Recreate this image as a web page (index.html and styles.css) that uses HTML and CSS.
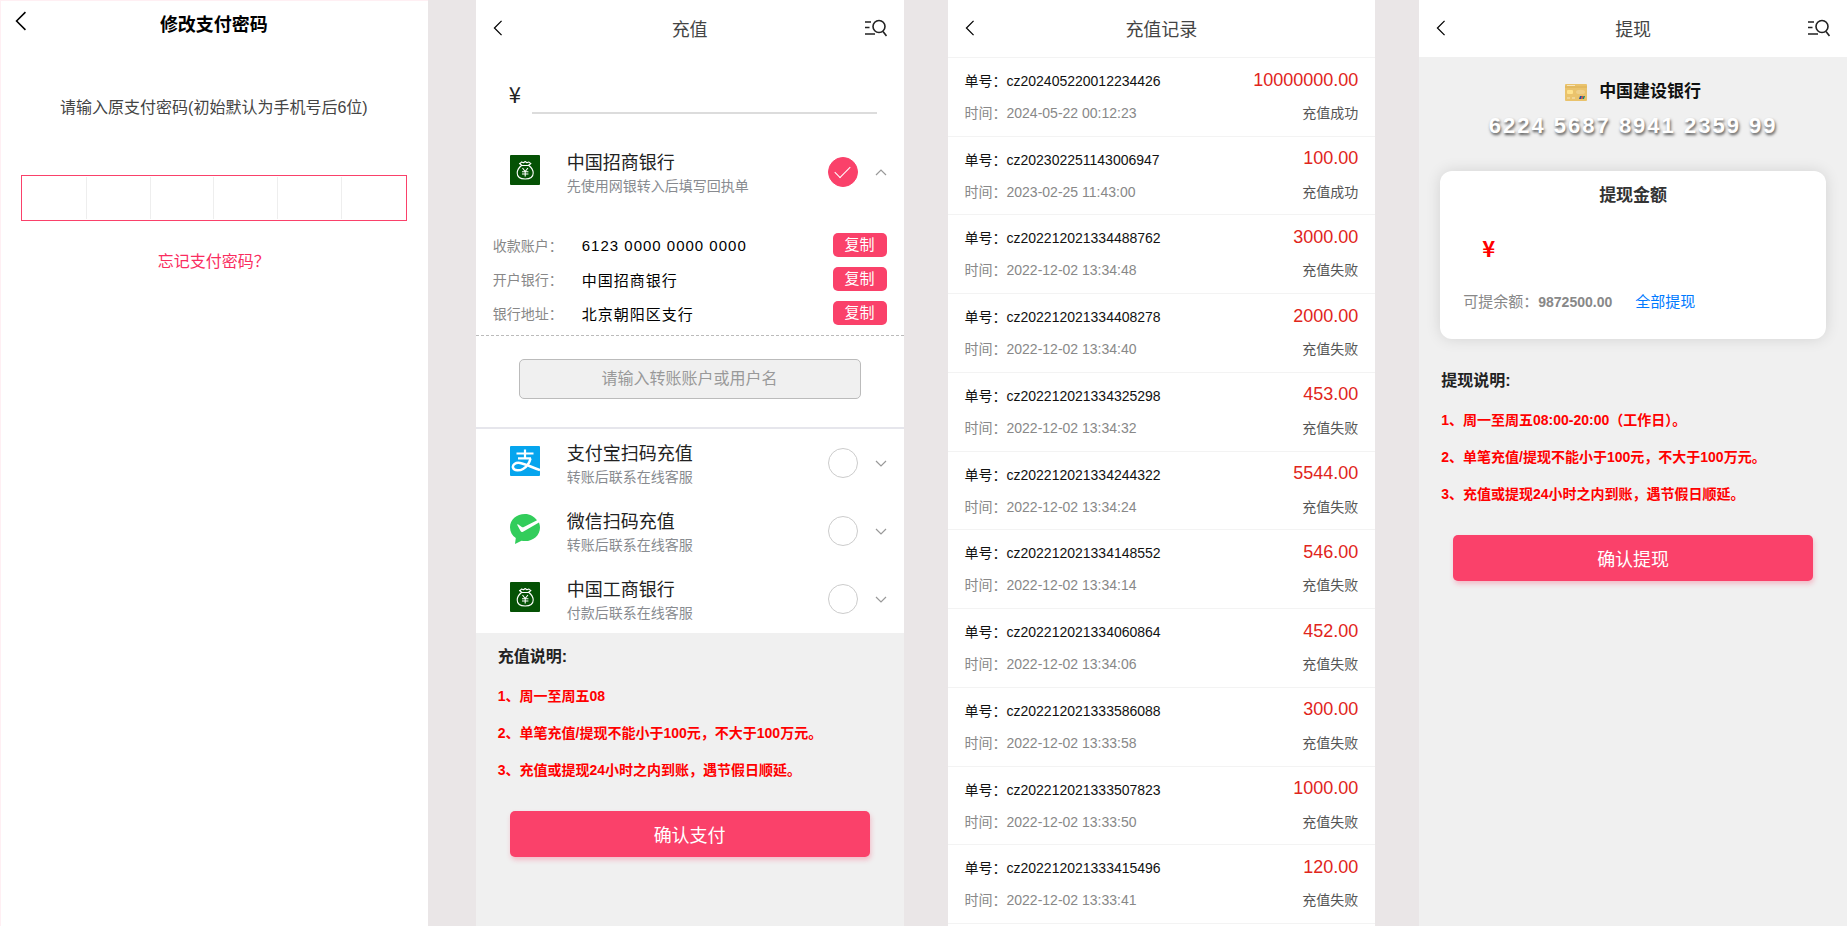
FILE: index.html
```html
<!DOCTYPE html>
<html lang="zh-CN">
	<head>
		<meta charset="utf-8">
		<meta name="viewport" content="width=device-width, initial-scale=1">
		<title>钱包</title>
		<link rel="stylesheet" href="styles.css">
	</head>
	<body>
		<!-- 公用图标 -->
		<svg class="sprite" aria-hidden="true">
			<symbol id="back" viewBox="0 0 10 18">
				<path d="M9 1 1 9l8 8" fill="none" stroke="currentColor" stroke-width="1.4"/>
			</symbol>
			<symbol id="search" viewBox="0 0 22 18">
				<path d="M0 3h6M0 8.500h4.500M0 15h10M18 12.500l3.500 4.500" fill="none" stroke="currentColor" stroke-width="1.6"/>
				<circle cx="14" cy="7.500" r="6" fill="none" stroke="currentColor" stroke-width="1.6"/>
			</symbol>
			<symbol id="arrow" viewBox="0 0 12 7">
				<path d="M1 1l5 5 5-5" fill="none" stroke="currentColor" stroke-width="1.2"/>
			</symbol>
			<symbol id="bag" viewBox="0 0 30 30">
				<rect width="30" height="30" rx="1" fill="#055205"/>
				<g fill="none" stroke="#fff" stroke-width="1.1" stroke-linejoin="round">
					<path d="M12 10.500 9.500 8.500c1-.3 1.500-1 2-1.500l2 .8L15.200 6.500l1.700 1.300 2-.8c.5.7 1 1.200 2 1.500L18.300 10.500zM11.500 10.500c-2.500 2-4.300 4.500-4.300 7.500 0 4 3.300 6 8 6s8-2 8-6c0-3-1.800-5.500-4.300-7.500"/>
					<path d="M12.500 13l2.700 3.500 2.700-3.500M12 16.800h6.400M12 19h6.400M15.200 16.500v5"/>
				</g>
			</symbol>
		</svg>

		<div class="wrap">
			<!-- 修改支付密码 -->
			<section class="page page-pwd">
				<header class="pwd-header">
					<button class="back" type="button" aria-label="返回"><svg><use href="#back"/></svg></button>
					<h1>修改支付密码</h1>
				</header>
				<p class="pwd-tip">请输入原支付密码(初始默认为手机号后6位)</p>
				<form class="pwd-box" aria-label="支付密码">
					<input type="password" maxlength="1" aria-label="第1位">
					<input type="password" maxlength="1" aria-label="第2位">
					<input type="password" maxlength="1" aria-label="第3位">
					<input type="password" maxlength="1" aria-label="第4位">
					<input type="password" maxlength="1" aria-label="第5位">
					<input type="password" maxlength="1" aria-label="第6位">
				</form>
				<a class="forget" href="#">忘记支付密码？</a>
			</section>

			<!-- 充值 -->
			<section class="page page-gray">
				<div class="white">
					<header class="header">
						<button class="back" type="button" aria-label="返回"><svg><use href="#back"/></svg></button>
						<h1>充值</h1>
						<button class="search" type="button" aria-label="查询记录"><svg><use href="#search"/></svg></button>
					</header>
					<div class="amount">
						<label for="payMoney">¥</label>
						<input id="payMoney" type="text">
					</div>
					<div class="bank bank-first">
						<svg class="bank-icon"><use href="#bag"/></svg>
						<label class="bank-name" for="pay1">中国招商银行<small>先使用网银转入后填写回执单</small></label>
						<input id="pay1" type="radio" name="pay" checked>
						<button class="arrow arrow-up" type="button" aria-label="收起"><svg><use href="#arrow"/></svg></button>
					</div>
					<dl class="account">
						<div>
							<dt>收款账户：</dt>
							<dd>6123 0000 0000 0000</dd>
							<button type="button">复制</button>
						</div>
						<div>
							<dt>开户银行：</dt>
							<dd>中国招商银行</dd>
							<button type="button">复制</button>
						</div>
						<div>
							<dt>银行地址：</dt>
							<dd>北京朝阳区支行</dd>
							<button type="button">复制</button>
						</div>
					</dl>
					<div class="payer">
						<input type="text" placeholder="请输入转账账户或用户名" aria-label="转账账户或用户名">
					</div>
					<div class="bank">
						<svg class="bank-icon" viewBox="0 0 30 30">
							<rect width="30" height="30" rx="1" fill="#06a5ee"/>
							<g fill="none" stroke="#fff">
								<path d="M6.500 7.500h17M15 3.500v8.500M8 12.300h13" stroke-width="2.200"/>
								<path d="M20.500 12.500c-1 4.500-4 8.500-7.500 10.500-3 1.700-9 2.300-10-1.300-.8-3 2.500-5.400 7-4.700 6 1 11.500 4.300 20 7" stroke-width="2.500"/>
							</g>
						</svg>
						<label class="bank-name" for="pay2">支付宝扫码充值<small>转账后联系在线客服</small></label>
						<input id="pay2" type="radio" name="pay">
						<button class="arrow" type="button" aria-label="展开"><svg><use href="#arrow"/></svg></button>
					</div>
					<div class="bank">
						<svg class="bank-icon" viewBox="0 0 30 30">
							<path d="M15 0C6.500 0 0 5.800 0 13.200c0 4.500 2.200 8.300 5.800 10.800L5 30l6.500-3.300c1.200.3 2.300.4 3.500.4 8.500 0 15-6.200 15-13.700 0-1.700-.4-3.300-1-4.900L13 17.800c-1 .5-1.800.4-2.300-.5L7.300 11c-.3-.7.3-1.100 1-.6l3.500 2.500c.6.4 1.300.5 2 .1L27 6.300C24.300 2.500 20 0 15 0z" fill="#32cd5b"/>
						</svg>
						<label class="bank-name" for="pay3">微信扫码充值<small>转账后联系在线客服</small></label>
						<input id="pay3" type="radio" name="pay">
						<button class="arrow" type="button" aria-label="展开"><svg><use href="#arrow"/></svg></button>
					</div>
					<div class="bank">
						<svg class="bank-icon"><use href="#bag"/></svg>
						<label class="bank-name" for="pay4">中国工商银行<small>付款后联系在线客服</small></label>
						<input id="pay4" type="radio" name="pay">
						<button class="arrow" type="button" aria-label="展开"><svg><use href="#arrow"/></svg></button>
					</div>
				</div>
				<div class="info">
					<h2>充值说明:</h2>
					<p>1、周一至周五08</p>
					<p>2、单笔充值/提现不能小于100元，不大于100万元。</p>
					<p>3、充值或提现24小时之内到账，遇节假日顺延。</p>
				</div>
				<button class="submit" type="button">确认支付</button>
			</section>

			<!-- 充值记录 -->
			<section class="page">
				<header class="header">
					<button class="back" type="button" aria-label="返回"><svg><use href="#back"/></svg></button>
					<h1>充值记录</h1>
				</header>
				<ul class="record">
					<li>
						<p><span>单号：cz202405220012234426</span><b>10000000.00</b></p>
						<p class="time"><span>时间：2024-05-22 00:12:23</span><em>充值成功</em></p>
					</li>
					<li>
						<p><span>单号：cz202302251143006947</span><b>100.00</b></p>
						<p class="time"><span>时间：2023-02-25 11:43:00</span><em>充值成功</em></p>
					</li>
					<li>
						<p><span>单号：cz202212021334488762</span><b>3000.00</b></p>
						<p class="time"><span>时间：2022-12-02 13:34:48</span><em>充值失败</em></p>
					</li>
					<li>
						<p><span>单号：cz202212021334408278</span><b>2000.00</b></p>
						<p class="time"><span>时间：2022-12-02 13:34:40</span><em>充值失败</em></p>
					</li>
					<li>
						<p><span>单号：cz202212021334325298</span><b>453.00</b></p>
						<p class="time"><span>时间：2022-12-02 13:34:32</span><em>充值失败</em></p>
					</li>
					<li>
						<p><span>单号：cz202212021334244322</span><b>5544.00</b></p>
						<p class="time"><span>时间：2022-12-02 13:34:24</span><em>充值失败</em></p>
					</li>
					<li>
						<p><span>单号：cz202212021334148552</span><b>546.00</b></p>
						<p class="time"><span>时间：2022-12-02 13:34:14</span><em>充值失败</em></p>
					</li>
					<li>
						<p><span>单号：cz202212021334060864</span><b>452.00</b></p>
						<p class="time"><span>时间：2022-12-02 13:34:06</span><em>充值失败</em></p>
					</li>
					<li>
						<p><span>单号：cz202212021333586088</span><b>300.00</b></p>
						<p class="time"><span>时间：2022-12-02 13:33:58</span><em>充值失败</em></p>
					</li>
					<li>
						<p><span>单号：cz202212021333507823</span><b>1000.00</b></p>
						<p class="time"><span>时间：2022-12-02 13:33:50</span><em>充值失败</em></p>
					</li>
					<li>
						<p><span>单号：cz202212021333415496</span><b>120.00</b></p>
						<p class="time"><span>时间：2022-12-02 13:33:41</span><em>充值失败</em></p>
					</li>
				</ul>
			</section>

			<!-- 提现 -->
			<section class="page page-gray">
				<header class="header white">
					<button class="back" type="button" aria-label="返回"><svg><use href="#back"/></svg></button>
					<h1>提现</h1>
					<button class="search" type="button" aria-label="查询记录"><svg><use href="#search"/></svg></button>
				</header>
				<div class="card-name">
					<svg viewBox="0 0 22 17">
						<rect width="22" height="17" rx="1" fill="#eac36c"/>
						<path d="M0 3h22" stroke="#dcb054" stroke-width="1"/>
						<path d="M2 1.500h8M2 14h3M7 14h3" stroke="#f7e6bd" stroke-width="1"/>
						<rect x="2" y="6" width="6" height="4" rx="1" fill="#ffe38e"/>
						<ellipse cx="15.500" cy="8" rx="4.500" ry="2.200" fill="#efd08a"/>
						<path d="M15 12h2l-1 3h-2z" fill="#20509c"/>
						<path d="M17 12h1.500l-1 3H16z" fill="#d6404c"/>
						<path d="M18.500 12H20l-1 3h-1.500z" fill="#128a70"/>
					</svg>
					<h2>中国建设银行</h2>
				</div>
				<p class="card-no">6224 5687 8941 2359 99</p>
				<div class="cash">
					<h2>提现金额</h2>
					<div class="cash-input">
						<label for="cashMoney">¥</label>
						<input id="cashMoney" type="text">
					</div>
					<p class="balance">可提余额：<b>9872500.00</b><a href="#">全部提现</a></p>
				</div>
				<div class="info">
					<h2>提现说明:</h2>
					<p>1、周一至周五08:00-20:00（工作日）。</p>
					<p>2、单笔充值/提现不能小于100元，不大于100万元。</p>
					<p>3、充值或提现24小时之内到账，遇节假日顺延。</p>
				</div>
				<button class="submit" type="button">确认提现</button>
			</section>
		</div>
	</body>
</html>
```
FILE: styles.css
```css
*{
	margin: 0;
	padding: 0;
	box-sizing: border-box;
}

body{
	background-color: #eae6e7;
	font-family: "Liberation Sans", "Noto Sans CJK SC", sans-serif;
	font-size: 14px;
	color: #222;
}

input, button{
	font-family: inherit;
	border: none;
	background: none;
	outline: none;
}

button{
	cursor: pointer;
}

a{
	text-decoration: none;
}

.sprite{
	display: none;
}

/* 四个页面横向排列 */
.wrap{
	display: flex;
	gap: 44px;
	min-height: 100vh;
}

.page{
	flex: 1;
	min-width: 0;
	display: flex;
	flex-direction: column;
	background-color: #fff;
}

.page-gray{
	background-color: #f0f0f0;
}

.white{
	background-color: #fff;
}

/* 头部 */
.header{
	display: grid;
	grid-template-columns: 40px 1fr 40px;
	align-items: center;
	height: 57px;
	padding: 0 17px 2px;
	flex-shrink: 0;
}

.header h1{
	font-size: 18px;
	font-weight: normal;
	text-align: center;
	color: #444;
}

.back{
	display: flex;
	color: #000;
}

.back svg{
	width: 10px;
	height: 16px;
}

.search{
	display: flex;
	justify-content: flex-end;
	color: #222;
}

.search svg{
	width: 22px;
	height: 18px;
}

/* 修改支付密码 */
.page-pwd{
	margin-right: 4px;
	box-shadow: inset 1px 1px #ffeff3;
}

.pwd-header{
	display: grid;
	grid-template-columns: 40px 1fr 40px;
	align-items: center;
	height: 46px;
	padding: 0 15px;
}

.pwd-header h1{
	font-size: 18px;
	text-align: center;
	color: #000;
}

.pwd-header .back svg{
	width: 12px;
	height: 20px;
	margin-bottom: 4px;
}

.pwd-tip{
	margin-top: 50px;
	line-height: 24px;
	font-size: 16px;
	text-align: center;
	color: #444;
}

.pwd-box{
	display: flex;
	height: 46px;
	margin: 55px 21px 0;
	padding: 1px;
	border: 1px solid #fa416a;
}

.pwd-box input{
	flex: 1;
	min-width: 0;
	text-align: center;
	font-size: 18px;
}

.pwd-box input + input{
	border-left: 1px solid #eee;
}

.forget{
	align-self: center;
	margin-top: 29px;
	line-height: 24px;
	font-size: 16px;
	color: #fa2d5f;
}

/* 充值金额 */
.amount{
	display: flex;
	align-items: center;
	margin: 17px 27px 0 33px;
}

.amount label{
	width: 23px;
	font-size: 22px;
	line-height: 30px;
	padding-bottom: 2px;
	font-family: "Noto Sans CJK SC", sans-serif;
}

.amount input{
	flex: 1;
	min-width: 0;
	height: 40px;
	font-size: 22px;
	border-bottom: 2px solid #dcdcdc;
}

/* 支付方式 */
.bank{
	display: flex;
	align-items: center;
	height: 68px;
	padding: 0 17px 0 34px;
}

.bank-first{
	margin-top: 24px;
}

.bank-icon{
	width: 30px;
	height: 30px;
	margin-bottom: 4px;
}

.bank-name{
	flex: 1;
	margin-left: 27px;
	font-size: 18px;
	line-height: 28px;
}

.bank-name small{
	display: block;
	font-size: 14px;
	line-height: 18px;
	color: #888b90;
}

.bank input{
	appearance: none;
	display: flex;
	align-items: center;
	justify-content: center;
	width: 30px;
	height: 30px;
	border: 1px solid #ccc;
	border-radius: 50%;
}

.bank input:checked{
	border-color: #fa416a;
	background-color: #fa416a;
}

/* 选中的对勾 */
.bank input:checked::before{
	content: "";
	width: 14px;
	height: 7px;
	margin-bottom: 4px;
	border-left: 1px solid #fff;
	border-bottom: 1px solid #fff;
	transform: rotate(-45deg);
}

.arrow{
	display: flex;
	margin-left: 17px;
	color: #999;
}

.arrow svg{
	width: 12px;
	height: 7px;
}

.arrow-up{
	transform: rotate(180deg);
}

/* 收款账户 */
.account{
	padding: 22px 17px 5px;
	border-bottom: 1px dashed #bbb;
}

.account div{
	display: flex;
	align-items: center;
	height: 34px;
	font-size: 15px;
}

.account dt{
	width: 89px;
	font-size: 14px;
	color: #888;
}

.account dd{
	flex: 1;
	letter-spacing: 1px;
	color: #000;
}

.account button{
	width: 54px;
	height: 24px;
	font-size: 15px;
	line-height: 24px;
	color: #fff;
	background-color: #fa416a;
	border-radius: 5px;
}

.payer{
	padding: 23px 43px 28px;
	border-bottom: 2px solid #e6e6ec;
}

.payer input{
	display: block;
	width: 100%;
	height: 40px;
	font-size: 16px;
	text-align: center;
	background-color: #f0f0f0;
	border: 1px solid #bbb;
	border-radius: 5px;
}

.payer input::placeholder{
	color: #999;
}

/* 说明 */
.info{
	padding: 12px 22px 0;
}

.info h2{
	margin-bottom: 9px;
	font-size: 16px;
	line-height: 24px;
}

.info p{
	font-size: 14px;
	font-weight: bold;
	line-height: 37px;
	color: #f00;
}

.submit{
	height: 46px;
	margin: 22px 34px;
	font-size: 18px;
	color: #fff;
	background-color: #fa416a;
	border-radius: 5px;
	box-shadow: 1px 3px 5px rgba(250, 65, 106, 0.3);
}

/* 充值记录 */
.record{
	flex: 1;
	display: grid;
	grid-auto-rows: 1fr;
	margin-bottom: 2px;
	list-style: none;
	border-top: 1px solid #f3f3f3;
}

.record li{
	padding-top: 9px;
	border-bottom: 1px solid #f3f3f3;
}

.record p{
	display: flex;
	justify-content: space-between;
	align-items: center;
	height: 26px;
	padding: 0 17px;
	color: #111;
}

.record .time{
	margin-top: 6px;
	color: #888;
}

.record b{
	font-size: 18px;
	font-weight: normal;
	color: #e1251b;
}

.record em{
	font-style: normal;
	color: #555;
}

/* 提现 */
.card-name{
	display: flex;
	justify-content: center;
	align-items: center;
	gap: 12px;
	margin-top: 21px;
}

.card-name svg{
	width: 22px;
	height: 17px;
}

.card-name h2{
	font-size: 17px;
	line-height: 28px;
	color: #111;
}

.card-no{
	margin-top: 5px;
	font-size: 22px;
	font-weight: bold;
	line-height: 30px;
	letter-spacing: 2px;
	text-align: center;
	color: #fff;
	text-shadow: 1px 2px 3px #555;
}

.cash{
	margin: 30px 21px 18px;
	padding: 13px 23px 25px;
	background-color: #fff;
	border-radius: 12px;
	box-shadow: 0 0 15px rgba(0, 0, 0, 0.12);
}

.cash h2{
	font-size: 17px;
	line-height: 24px;
	text-align: center;
	color: #333;
}

.cash-input{
	display: flex;
	align-items: center;
	height: 50px;
	margin: 14px 0 18px;
	padding-left: 19px;
}

.cash-input label{
	width: 24px;
	font-size: 22px;
	font-weight: bold;
	font-family: "Noto Sans CJK SC", sans-serif;
	color: #f00;
}

.cash-input input{
	flex: 1;
	min-width: 0;
	height: 40px;
	font-size: 22px;
}

.balance{
	font-size: 15px;
	line-height: 24px;
	color: #888;
}

.balance b{
	font-size: 14px;
}

.balance a{
	margin-left: 23px;
	color: #007aff;
}
```
